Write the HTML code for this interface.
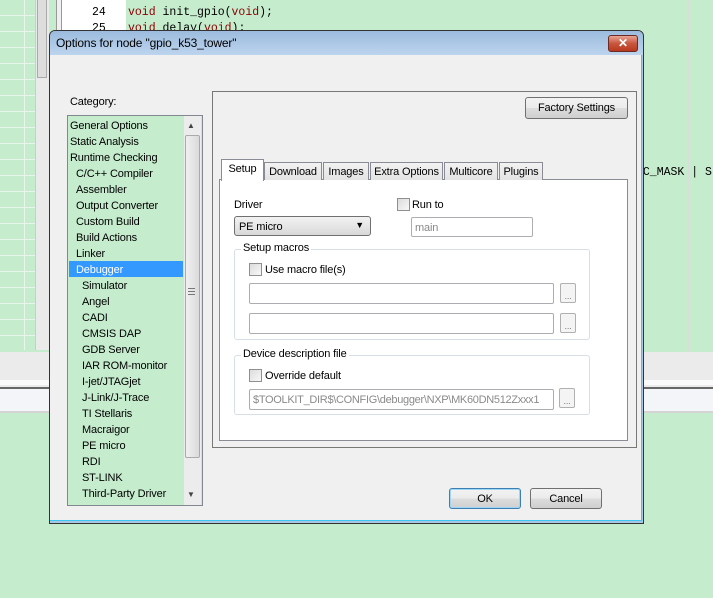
<!DOCTYPE html>
<html><head><style>
*{box-sizing:border-box;margin:0;padding:0}
body{width:713px;height:598px;background:#c6ecce;font-family:"Liberation Sans",sans-serif;font-size:11px;letter-spacing:-0.15px;color:#000;position:relative;overflow:hidden}
.a{position:absolute;white-space:nowrap}
.t{margin-top:1px}
.mono{font-family:"Liberation Mono",monospace;font-size:11.5px;letter-spacing:0}
.btn{position:absolute;border:1px solid #707070;border-radius:3px;background:linear-gradient(#f2f2f2,#ebebeb 50%,#dddddd 51%,#cfcfcf);text-align:center;white-space:nowrap}
.cb{position:absolute;width:13px;height:13px;border:1px solid #8e8f8f;background:linear-gradient(135deg,#dcdcdc,#f8f8f8)}
.in{position:absolute;border:1px solid #abadb3;background:#fff;border-radius:2px}
.grp{position:absolute;border:1px solid #d5dfe5;border-radius:3px}
.leg{position:absolute;background:#fff;padding:0 2px;top:-8px;left:6px;white-space:nowrap}
.sm{position:absolute;width:16px;height:20px;border:1px solid #b0b0b0;border-radius:2px;background:#f4f4f4;font-size:9px;color:#777;text-align:center;line-height:24px}
.tab{position:absolute;top:162px;height:18px;border:1px solid #898c95;border-bottom:none;background:linear-gradient(#f2f2f2,#e3e3e3);padding:3px 0 0;text-align:center;white-space:nowrap}
.li{position:absolute;height:16px;line-height:18px;white-space:nowrap}
</style></head><body>
<div class="a" style="left:0;top:0;width:35px;height:350px;background-image:linear-gradient(90deg,transparent 24px,#e8f5ea 24px,#e8f5ea 25px,transparent 25px),linear-gradient(transparent 15px,#e8f5ea 15px);background-size:35px 16px"></div>
<div class="a" style="left:35px;top:0;width:14px;height:350px;background:#eaeaea;border-left:1px solid #ccc"></div>
<div class="a" style="left:37px;top:0;width:10px;height:78px;background:#ddd;border:1px solid #aaa;border-top:none"></div>
<div class="a" style="left:56px;top:0;width:6px;height:360px;border-left:1px solid #999;border-right:1px solid #999;background:#f0f0f0"></div>
<div class="a" style="left:62px;top:0;width:64px;height:40px;background:#fff"></div>
<div class="a mono" style="left:92px;top:6px">24</div>
<div class="a mono" style="left:92px;top:22px">25</div>
<div class="a mono" style="left:128px;top:6px;color:#8b0000">void <span style="color:#000">init_gpio(</span>void<span style="color:#000">);</span></div>
<div class="a mono" style="left:128px;top:22px;color:#8b0000">void <span style="color:#000">delay(</span>void<span style="color:#000">);</span></div>
<div class="a mono" style="left:636px;top:166px">IC_MASK | S</div>
<div class="a" style="left:688px;top:0;width:1px;height:364px;background:#dcdcdc"></div>
<div class="a" style="left:0;top:352px;width:713px;height:61px;background:#ebebeb"></div>
<div class="a" style="left:0;top:380px;width:713px;height:5px;background:#fafafa"></div>
<div class="a" style="left:0;top:387px;width:713px;height:2px;background:#666"></div>
<div class="a" style="left:0;top:389px;width:713px;height:22px;background:#f4f5f8"></div>
<div class="a" style="left:0;top:411px;width:713px;height:2px;background:#d4d4d4"></div>

<div class="a" style="left:49px;top:30px;width:595px;height:494px;border:1px solid #333;border-radius:6px 6px 0 0;background:#aac6e4"></div>
<div class="a" style="left:50px;top:31px;width:593px;height:24px;background:linear-gradient(#9cbbdd,#bcd4ee);border-radius:5px 5px 0 0"></div>
<div class="a" style="left:56px;top:36px;font-size:12px">Options for node "gpio_k53_tower"</div>
<div class="a" style="left:608px;top:35px;width:30px;height:17px;border:1px solid #6b2a22;border-radius:3px;background:linear-gradient(#e8a493,#c9553d 50%,#b8391f);color:#fff;text-align:center;font-weight:bold;font-size:12px;line-height:15px">✕</div>
<div class="a" style="left:50px;top:55px;width:592px;height:466px;background:#f0f0f0;border-right:1px solid #3cc8f0;border-bottom:1px solid #3cc8f0"></div>

<div class="a t" style="left:70px;top:95px">Category:</div>
<div class="a" style="left:67px;top:115px;width:136px;height:391px;border:1px solid #828790;background:#c6ecce"></div>
<div class="a" style="left:184px;top:116px;width:17px;height:389px;background:#ececec"></div>
<div class="a" style="left:185px;top:135px;width:15px;height:323px;background:linear-gradient(90deg,#f0f0f0,#dadada);border:1px solid #aaa;border-radius:2px"></div>
<div class="a" style="left:187px;top:121px;font-size:8px;color:#444">▲</div>
<div class="a" style="left:187px;top:490px;font-size:8px;color:#444">▼</div>
<div class="a" style="left:188px;top:288px;width:7px;height:7px;border-top:1px solid #777;border-bottom:1px solid #777"><div style="border-top:1px solid #777;margin-top:2px"></div></div>
<div class="a" style="left:69px;top:261px;width:114px;height:16px;background:#3399ff"></div>
<div class="li" style="left:70px;top:117px">General Options</div>
<div class="li" style="left:70px;top:133px">Static Analysis</div>
<div class="li" style="left:70px;top:149px">Runtime Checking</div>
<div class="li" style="left:76px;top:165px">C/C++ Compiler</div>
<div class="li" style="left:76px;top:181px">Assembler</div>
<div class="li" style="left:76px;top:197px">Output Converter</div>
<div class="li" style="left:76px;top:213px">Custom Build</div>
<div class="li" style="left:76px;top:229px">Build Actions</div>
<div class="li" style="left:76px;top:245px">Linker</div>
<div class="li" style="left:76px;top:261px;color:#fff">Debugger</div>
<div class="li" style="left:82px;top:277px">Simulator</div>
<div class="li" style="left:82px;top:293px">Angel</div>
<div class="li" style="left:82px;top:309px">CADI</div>
<div class="li" style="left:82px;top:325px">CMSIS DAP</div>
<div class="li" style="left:82px;top:341px">GDB Server</div>
<div class="li" style="left:82px;top:357px">IAR ROM-monitor</div>
<div class="li" style="left:82px;top:373px">I-jet/JTAGjet</div>
<div class="li" style="left:82px;top:389px">J-Link/J-Trace</div>
<div class="li" style="left:82px;top:405px">TI Stellaris</div>
<div class="li" style="left:82px;top:421px">Macraigor</div>
<div class="li" style="left:82px;top:437px">PE micro</div>
<div class="li" style="left:82px;top:453px">RDI</div>
<div class="li" style="left:82px;top:469px">ST-LINK</div>
<div class="li" style="left:82px;top:485px">Third-Party Driver</div>

<div class="a" style="left:212px;top:91px;width:425px;height:357px;border:1px solid #777"></div>
<div class="btn" style="left:525px;top:97px;width:103px;height:22px;line-height:21px">Factory Settings</div>

<div class="a" style="left:219px;top:179px;width:409px;height:262px;border:1px solid #898c95;background:#fff"></div>
<div class="tab" style="left:264px;width:58px">Download</div>
<div class="tab" style="left:323px;width:46px">Images</div>
<div class="tab" style="left:370px;width:73px">Extra Options</div>
<div class="tab" style="left:444px;width:54px">Multicore</div>
<div class="tab" style="left:499px;width:44px">Plugins</div>
<div class="tab" style="left:221px;top:159px;width:43px;height:22px;background:#fff;padding-top:3px">Setup</div>

<div class="a t" style="left:234px;top:198px">Driver</div>
<div class="a" style="left:234px;top:216px;width:137px;height:20px;border:1px solid #707070;border-radius:3px;background:linear-gradient(#f2f2f2,#e6e6e6 50%,#d8d8d8);padding:4px 4px">PE micro<span style="position:absolute;right:6px;top:3px;font-size:9px">▼</span></div>
<div class="cb" style="left:397px;top:198px"></div>
<div class="a t" style="left:412px;top:198px">Run to</div>
<div class="in" style="left:411px;top:217px;width:122px;height:20px;color:#888;padding:4px 3px">main</div>

<div class="grp" style="left:234px;top:249px;width:356px;height:91px"><span class="leg">Setup macros</span></div>
<div class="cb" style="left:249px;top:263px"></div>
<div class="a t" style="left:265px;top:263px">Use macro file(s)</div>
<div class="in" style="left:249px;top:283px;width:305px;height:21px"></div>
<div class="sm" style="left:560px;top:283px">...</div>
<div class="in" style="left:249px;top:313px;width:305px;height:21px"></div>
<div class="sm" style="left:560px;top:313px">...</div>

<div class="grp" style="left:234px;top:355px;width:356px;height:60px"><span class="leg">Device description file</span></div>
<div class="cb" style="left:249px;top:369px"></div>
<div class="a t" style="left:265px;top:369px">Override default</div>
<div class="in" style="left:249px;top:389px;width:305px;height:21px;color:#8a8a8a;padding:4px 3px;overflow:hidden;white-space:nowrap;letter-spacing:-0.3px">$TOOLKIT_DIR$\CONFIG\debugger\NXP\MK60DN512Zxxx1</div>
<div class="sm" style="left:559px;top:388px">...</div>

<div class="btn" style="left:449px;top:488px;width:72px;height:21px;line-height:20px;border-color:#3c7fb1;box-shadow:inset 0 0 0 1px #9fd6f5">OK</div>
<div class="btn" style="left:530px;top:488px;width:72px;height:21px;line-height:20px">Cancel</div>
</body></html>
